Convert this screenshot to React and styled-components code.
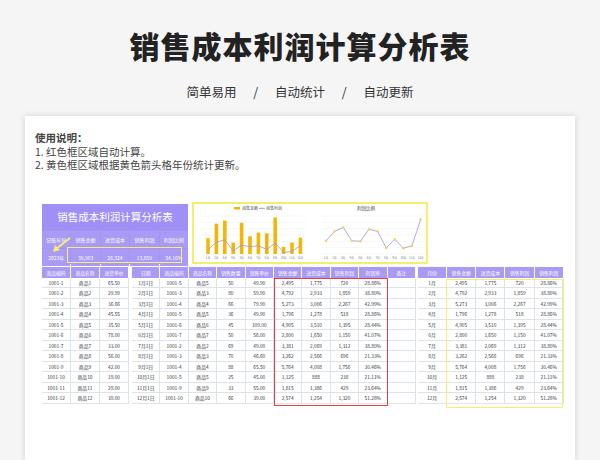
import React from "react";
import styled, { createGlobalStyle } from "styled-components";

const G = createGlobalStyle`
  body{margin:0;background:#f5f5f6;font-family:"Noto Sans CJK SC","Noto Sans",sans-serif;}
`;
const Page = styled.div`width:600px;height:460px;overflow:hidden;display:flex;flex-direction:column;align-items:center;`;
const Title = styled.h1`margin:24px 0 0;font-size:30px;font-weight:900;color:#222;letter-spacing:1px;line-height:42px;`;
const Sub = styled.div`margin-top:18px;font-size:12.5px;line-height:16px;color:#333;white-space:pre;`;
const Card = styled.div`margin-top:16px;width:550px;flex:1;background:#fff;box-shadow:0 0 6px rgba(0,0,0,.15);padding:15px 0 0 10px;box-sizing:border-box;`;
const Note = styled.div`font-size:10.5px;color:#444;line-height:13.5px;b{font-weight:700;}`;
const Dash = styled.div`display:flex;gap:4px;margin:30px 0 0 7px;align-items:flex-end;`;
const Panel = styled.div`width:146px;height:60px;background:#a393f3;display:grid;grid-template-rows:26px 17px 17px;grid-template-columns:repeat(5,1fr);gap:1px;position:relative;`;
const PTitle = styled.div`grid-column:1/6;display:flex;align-items:center;justify-content:center;color:#fff;font-size:10.5px;background:#a08ff4;`;
const PCell = styled.div`display:flex;align-items:center;justify-content:center;color:#fff;font-size:5px;background:#a99af5;`;
const Charts = styled.div`width:232px;height:58px;border:2px solid #f4ee6a;background:#fff;`;
const Tables = styled.div`display:flex;margin:3px 0 0 7px;position:relative;`;
const Table = styled.div`display:grid;grid-template-columns:repeat(${p => p.n},${p => p.w}px);margin-right:${p => p.mr}px;`;
const H = styled.div`height:11px;background:#a99af5;color:#fff;font-size:4.8px;display:flex;align-items:center;justify-content:center;border-right:1px solid #fff;`;
const C = styled.div`height:10.5px;font-size:4.8px;color:#333;display:flex;align-items:center;justify-content:center;border-right:1px solid #dde3ea;border-bottom:1px solid #dde3ea;box-sizing:border-box;`;
const Box = styled.div`position:absolute;border:1.5px solid ${p => p.c};`;
const Arrow = styled.div`position:absolute;left:10px;top:30px;`;
const HL = styled.div`position:absolute;border:1.5px solid #f4ee6a;left:25px;top:43px;width:113px;height:14px;`;

const prices = ["65.50","29.99","36.66","45.55","35.50","78.00","33.00","56.00","42.00","19.00","29.00","39.00"];
const codes = [5,3,4,5,6,7,2,3,4,5,9,10];
const qty = [50,80,66,36,45,50,69,70,88,25,33,66];
const up = ["49.90","59.90","79.90","49.90","109.00","56.00","49.00","46.60","65.50","45.00","55.00","39.00"];
const amt = [2495,4792,5273,1796,4905,2800,3381,3262,5764,1125,1815,2574];
const cost = [1775,2933,3006,1278,3510,1650,2069,2566,4008,888,1386,1254];
const prof = [720,1859,2267,518,1395,1150,1312,696,1756,238,429,1320];
const rate = ["28.86%","38.80%","42.99%","28.86%","28.44%","41.07%","38.80%","21.33%","30.46%","21.11%","23.64%","51.28%"];
const f = n => n.toLocaleString("en-US");

function Chart() {
  const bx = i => 14 + i * 8.4;
  const by = v => 50 - v / 6000 * 38;
  const rx = i => 132 + i * 8.6;
  const ry = v => 50 - (v - 15) / 40 * 38;
  return (
    <svg width="232" height="58" viewBox="0 0 232 58">
      <rect x="40" y="3" width="6" height="2.5" fill="#f2b705" />
      <text x="48" y="5.5" fontSize="4" fill="#555">销售金额</text>
      <line x1="65" y1="4.3" x2="71" y2="4.3" stroke="#9c95d6" />
      <text x="72" y="5.5" fontSize="4" fill="#555">销售利润</text>
      <text x="163" y="6" fontSize="4.5" fill="#444">利润比例</text>
      {[0,1,2,3,4,5,6].map(k => <g key={k}><line x1="10" x2="112" y1={50 - k * 6.33} y2={50 - k * 6.33} stroke="#eee" strokeWidth=".5" /><line x1="128" x2="230" y1={50 - k * 6.33} y2={50 - k * 6.33} stroke="#eee" strokeWidth=".5" /></g>)}
      {amt.map((v, i) => <rect key={i} x={bx(i) - 1.8} y={by(v)} width="3.6" height={50 - by(v)} fill="#f2b705" />)}
      <polyline fill="none" stroke="#9c95d6" strokeWidth=".8" points={prof.map((v, i) => `${bx(i)},${by(v)}`).join(" ")} />
      <polyline fill="none" stroke="#9c95d6" strokeWidth=".8" points={rate.map((v, i) => `${rx(i)},${ry(parseFloat(v))}`).join(" ")} />
      {rate.map((v, i) => <circle key={i} cx={rx(i)} cy={ry(parseFloat(v))} r="1.2" fill="#f2d24a" />)}
      {amt.map((v, i) => <g key={i}><text x={bx(i)} y="55" fontSize="2.8" fill="#777" textAnchor="middle">{i + 1}月</text><text x={rx(i)} y="55" fontSize="2.8" fill="#777" textAnchor="middle">{i + 1}月</text></g>)}
    </svg>
  );
}

export default function App() {
  const rows = [...Array(12).keys()];
  return (
    <Page>
      <G />
      <Title>销售成本利润计算分析表</Title>
      <Sub>{"简单易用      /      自动统计      /      自动更新"}</Sub>
      <Card>
        <Note><b>使用说明：</b><br />1. 红色框区域自动计算。<br />2. 黄色框区域根据黄色箭头格年份统计更新。</Note>
        <Dash>
          <Panel>
            <PTitle>销售成本利润计算分析表</PTitle>
            {["记账年份","销售金额","进货成本","销售利润","利润比例"].map(t => <PCell key={t}>{t}</PCell>)}
            {["2023年","39,983","26,324","13,659","34.16%"].map(t => <PCell key={t}>{t}</PCell>)}
            <HL />
            <Arrow><svg width="20" height="16"><line x1="18" y1="1" x2="4" y2="12" stroke="#f4ee6a" strokeWidth="2" /><polygon points="1,15 3,8 8,13" fill="#f4ee6a" /></svg></Arrow>
          </Panel>
          <Charts><Chart /></Charts>
        </Dash>
        <Tables>
          <Table n={3} w={29} mr={3}>
            {["商品编码","商品名称","进货单价"].map(h => <H key={h}>{h}</H>)}
            {rows.map(i => <React.Fragment key={i}><C>1001-{i + 1}</C><C>商品{i + 1}</C><C>{prices[i]}</C></React.Fragment>)}
          </Table>
          <Table n={10} w={28.4} mr={2}>
            {["日期","商品编码","商品名称","销售数量","销售单价","销售金额","进货成本","销售利润","利润率","备注"].map(h => <H key={h}>{h}</H>)}
            {rows.map(i => <React.Fragment key={i}><C>{i + 1}月1日</C><C>1001-{codes[i]}</C><C>商品{codes[i]}</C><C>{qty[i]}</C><C>{up[i]}</C><C>{f(amt[i])}</C><C>{f(cost[i])}</C><C>{f(prof[i])}</C><C>{rate[i]}</C><C /></React.Fragment>)}
          </Table>
          <Table n={5} w={29.2} mr={0}>
            {["月份","销售金额","进货成本","销售利润","销售利润"].map((h, k) => <H key={k}>{h}</H>)}
            {rows.map(i => <React.Fragment key={i}><C>{i + 1}月</C><C>{f(amt[i])}</C><C>{f(cost[i])}</C><C>{f(prof[i])}</C><C>{rate[i]}</C></React.Fragment>)}
          </Table>
          <Box c="#e0403f" style={{ left: 232, top: 11, width: 112, height: 126 }} />
          <Box c="#f4ee6a" style={{ left: 404, top: 12, width: 115, height: 127 }} />
        </Tables>
      </Card>
    </Page>
  );
}
